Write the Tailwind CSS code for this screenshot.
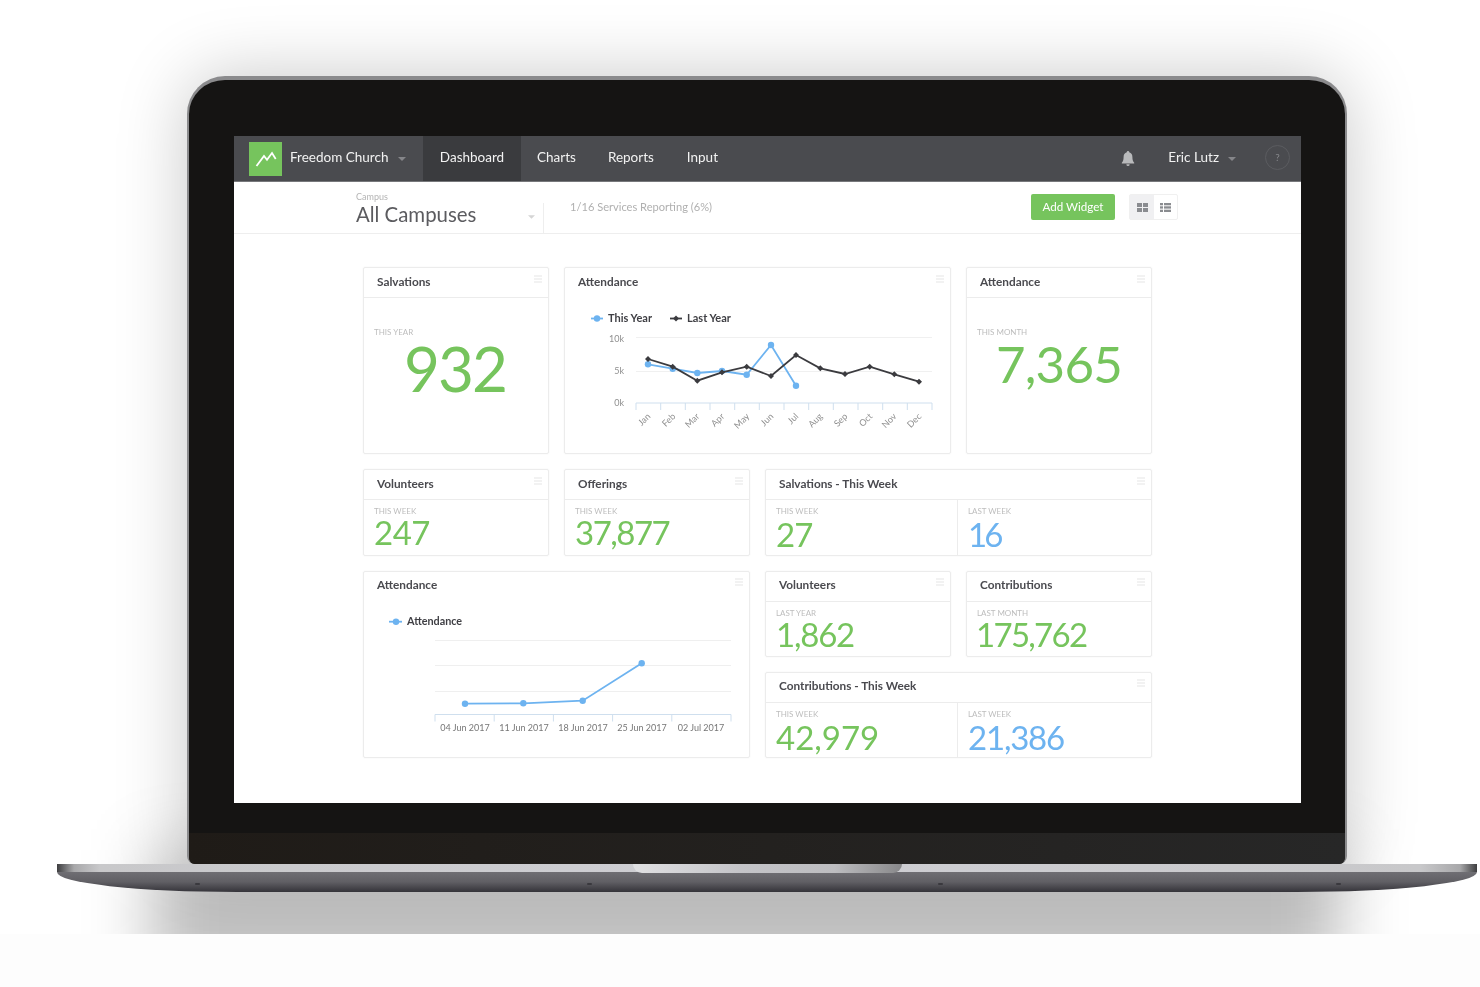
<!DOCTYPE html>
<html lang="en">
<head>
    <meta charset="UTF-8">
    <meta name="viewport" content="width=device-width, initial-scale=1.0">
    <title>Freedom Church Dashboard</title>
    <script src="https://cdn.jsdelivr.net/npm/@tailwindcss/browser@4"></script>
</head>
<body class="bg-[#fdfdfd] font-['Lato','Liberation_Sans',sans-serif] overflow-hidden">
  <div class="relative h-[934px] overflow-hidden bg-white pt-[76px]">
    <!-- soft shadow under the laptop -->
    <div class="absolute left-[150px] top-[850px] w-[1190px] h-[130px] bg-black/25 blur-[32px]"></div>

    <!-- lid -->
    <div class="relative ml-[187px] w-[1160px] h-[788px] flex flex-col border-x-[2px] border-t-[4px] border-[#8b8b8d] rounded-t-[38px] rounded-b-[8px] bg-[#151413] shadow-[0_0_70px_rgba(0,0,0,0.22)]">
      <div class="pt-[56px] pl-[45px] pr-[44px]">
        <div class="w-[1067px] h-[667px] bg-white blur-[0.7px] overflow-hidden">
          <!-- nav -->
          <div class="h-[46px] bg-[#4a4b4f] flex items-center text-[#f2f2f2] text-[13.500px] border-b border-[#77787b]">
            <div class="ml-[15px] w-[33px] h-[34px] bg-[#76c45d]">
              <svg viewBox="0 0 33 34" class="w-[33px] h-[34px]" fill="none" stroke="#fff" stroke-width="1.800"><polyline points="7.5,24 15,14 18,17.7 23,11 26.7,17"/></svg>
            </div>
            <span class="ml-[8px] mb-[2px] w-[99px] whitespace-nowrap">Freedom Church</span>
            <svg class="ml-[9px] w-[8px] h-[4px]" viewBox="0 0 8 4"><path d="M0 0h8L4 4z" fill="#85868a"/></svg>
            <div class="ml-[17px] w-[98px] h-full pb-[2px] bg-[#3a3b3e] flex items-center justify-center">Dashboard</div>
            <span class="ml-[16px] mb-[2px]">Charts</span>
            <span class="ml-[32px] mb-[2px]">Reports</span>
            <span class="ml-[33px] mb-[2px]">Input</span>
            <svg class="ml-auto w-[14px] h-[15px]" viewBox="0 0 14 15"><path d="M7 0a1.200 1.200 0 0 1 1.200 1.300C10.400 1.900 11.400 3.700 11.400 6c0 3 .6 4.300 1.800 5.700v.8H.8v-.8C2 10.300 2.600 9 2.600 6c0-2.300 1-4.100 3.200-4.700A1.200 1.200 0 0 1 7 0zM5.400 13.200h3.200A1.700 1.700 0 0 1 7 15a1.700 1.700 0 0 1-1.600-1.800z" fill="#b9babc"/></svg>
            <span class="ml-[33px] mb-[2px]">Eric Lutz</span>
            <svg class="ml-[9px] w-[8px] h-[4px]" viewBox="0 0 8 4"><path d="M0 0h8L4 4z" fill="#85868a"/></svg>
            <div class="ml-[29px] mr-[11px] mb-[2px] w-[25px] h-[25px] rounded-full border border-[#5b5c60] flex items-center justify-center text-[10px] text-[#85868a]">?</div>
          </div>
          <!-- sub header -->
          <div class="h-[52px] border-b border-[#eeeeee] flex text-[#555]">
            <div class="ml-[122px] w-[187px] pt-[9px] relative">
              <div class="text-[9px] leading-[11px] text-[#b4b4b4]">Campus</div>
              <div class="text-[20.400px] leading-[24px] text-[#5b5b5f]">All Campuses</div>
              <svg class="absolute right-[8px] top-[33px] w-[7px] h-[4px]" viewBox="0 0 8 4"><path d="M0 0h8L4 4z" fill="#d5d5d5"/></svg>
            </div>
            <div class="mt-[21px] w-px bg-[#eeeeee]"></div>
            <div class="ml-[26px] mt-[18px] text-[11.100px] leading-[14px] text-[#b0b0b0]">1/16 Services Reporting (6%)</div>
            <button class="ml-auto mt-[12px] w-[84px] h-[26px] bg-[#76c45d] rounded-[2px] text-white text-[11.600px]">Add Widget</button>
            <div class="ml-[14px] mr-[123px] mt-[12px] w-[49px] h-[26px] flex border border-[#f0f0f0] rounded-[2px]">
              <div class="w-[24px] bg-[#f0f0f2] flex items-center justify-center">
                <svg class="w-[11px] h-[9px]" viewBox="0 0 11 9" fill="#8a8c90"><rect width="5" height="4"/><rect x="6" width="5" height="4"/><rect y="5" width="5" height="4"/><rect x="6" y="5" width="5" height="4"/></svg>
              </div>
              <div class="flex-1 flex items-center justify-center">
                <svg class="w-[11px] h-[9px]" viewBox="0 0 11 9" fill="#8a8c90"><rect width="3" height="2.300"/><rect x="4" width="7" height="2.300"/><rect y="3.300" width="3" height="2.300"/><rect x="4" y="3.300" width="7" height="2.300"/><rect y="6.700" width="3" height="2.300"/><rect x="4" y="6.700" width="7" height="2.300"/></svg>
              </div>
            </div>
          </div>
          <!-- widgets -->
          <div class="ml-[129px] mt-[33px] grid grid-cols-[186px_186px_186px_186px] grid-rows-[187px_87px_86px_86px] gap-[15px]">

            <div class="border border-[#ececec] rounded-[2px] shadow-[0_0_2px_rgba(0,0,0,0.06)]">
              <div class="h-[30px] pb-[2px] border-b border-[#ececec] pl-[13px] flex items-center justify-between text-[11.800px] font-bold text-[#4a4a4f]">Salvations<svg class="mr-[6px] mb-[6px] w-[8px] h-[8px]" viewBox="0 0 8 8" fill="#f2f2f2"><path d="M0 0h8v2H0zM0 3h8v2H0zM0 6h8v2H0z"/></svg></div>
              <div class="pl-[10px] pt-[29px] text-[8px] leading-[10px] uppercase text-[#bdbdbd]">This Year</div>
              <div class="text-center pr-[2px] mt-[1px] text-[62px] leading-[60px] tracking-[-2px] text-[#76c45d]">932</div>
            </div>

            <div class="col-span-2 border border-[#ececec] rounded-[2px] shadow-[0_0_2px_rgba(0,0,0,0.06)]">
              <div class="h-[30px] pb-[3px] pl-[13px] flex items-center justify-between text-[11.800px] font-bold text-[#4a4a4f]">Attendance<svg class="mr-[6px] mb-[6px] w-[8px] h-[8px]" viewBox="0 0 8 8" fill="#f2f2f2"><path d="M0 0h8v2H0zM0 3h8v2H0zM0 6h8v2H0z"/></svg></div>
              <svg class="block w-[385px] h-[155px]" viewBox="565 298 385 155" font-family="Lato, Liberation Sans, sans-serif">
                <g stroke="#f0f0f0"><line x1="636" y1="337.500" x2="932" y2="337.500"/><line x1="636" y1="371.500" x2="932" y2="371.500"/></g>
                <path d="M636 403H932M636 403v7M660.700 403v7M685.300 403v7M710 403v7M734.700 403v7M759.300 403v7M784 403v7M808.700 403v7M833.300 403v7M858 403v7M882.700 403v7M907.300 403v7M932 403v7" stroke="#cfdfee" fill="none"/>
                <g font-size="9" fill="#8f8f8f" text-anchor="end"><text x="624" y="342">10k</text><text x="624" y="374">5k</text><text x="624" y="406">0k</text></g>
                <g font-size="9" fill="#8f8f8f" text-anchor="end">
                  <text transform="translate(651 417) rotate(-45)">Jan</text><text transform="translate(676 417) rotate(-45)">Feb</text><text transform="translate(700 417) rotate(-45)">Mar</text><text transform="translate(725 417) rotate(-45)">Apr</text><text transform="translate(750 417) rotate(-45)">May</text><text transform="translate(774 417) rotate(-45)">Jun</text><text transform="translate(799 417) rotate(-45)">Jul</text><text transform="translate(823 417) rotate(-45)">Aug</text><text transform="translate(848 417) rotate(-45)">Sep</text><text transform="translate(873 417) rotate(-45)">Oct</text><text transform="translate(897 417) rotate(-45)">Nov</text><text transform="translate(922 417) rotate(-45)">Dec</text>
                </g>
                <polyline points="648,364.300 672.700,368.700 697.300,373 722,371 746.700,374.700 771,345 796,385.700" fill="none" stroke="#6db3f0" stroke-width="1.800"/>
                <g fill="#6db3f0"><circle cx="648" cy="364.300" r="3.200"/><circle cx="672.700" cy="368.700" r="3.200"/><circle cx="697.300" cy="373" r="3.200"/><circle cx="722" cy="371" r="3.200"/><circle cx="746.700" cy="374.700" r="3.200"/><circle cx="771" cy="345" r="3.200"/><circle cx="796" cy="385.700" r="3.200"/></g>
                <polyline points="648,359 672.700,366.700 697.300,380.700 722,372.300 746.700,366.700 771,376 796,355 820.300,368.300 845,374 869.700,366.700 894.300,374.300 919,381.700" fill="none" stroke="#3b3b3f" stroke-width="1.800"/>
                <g fill="#3b3b3f"><path d="M648 356l3 3-3 3-3-3zM672.700 363.700l3 3-3 3-3-3zM697.300 377.700l3 3-3 3-3-3zM722 369.300l3 3-3 3-3-3zM746.700 363.700l3 3-3 3-3-3zM771 373l3 3-3 3-3-3zM796 352l3 3-3 3-3-3zM820.300 365.300l3 3-3 3-3-3zM845 371l3 3-3 3-3-3zM869.700 363.700l3 3-3 3-3-3zM894.300 371.300l3 3-3 3-3-3zM919 378.700l3 3-3 3-3-3z"/></g>
                <line x1="591" y1="318.500" x2="603" y2="318.500" stroke="#6db3f0" stroke-width="1.800"/><circle cx="597" cy="318.500" r="3.200" fill="#6db3f0"/>
                <text x="608" y="322" font-size="11" font-weight="700" fill="#3f3f44">This Year</text>
                <line x1="670" y1="318.500" x2="682" y2="318.500" stroke="#3b3b3f" stroke-width="1.800"/><path d="M676 315.500l3 3-3 3-3-3z" fill="#3b3b3f"/>
                <text x="687" y="322" font-size="11" font-weight="700" fill="#3f3f44">Last Year</text>
              </svg>
            </div>

            <div class="border border-[#ececec] rounded-[2px] shadow-[0_0_2px_rgba(0,0,0,0.06)]">
              <div class="h-[30px] pb-[2px] border-b border-[#ececec] pl-[13px] flex items-center justify-between text-[11.800px] font-bold text-[#4a4a4f]">Attendance<svg class="mr-[6px] mb-[6px] w-[8px] h-[8px]" viewBox="0 0 8 8" fill="#f2f2f2"><path d="M0 0h8v2H0zM0 3h8v2H0zM0 6h8v2H0z"/></svg></div>
              <div class="pl-[10px] pt-[29px] text-[8px] leading-[10px] uppercase text-[#bdbdbd]">This Month</div>
              <div class="text-center text-[51px] leading-[48px] tracking-[-0.800px] text-[#76c45d] mt-[3px]">7,365</div>
            </div>

            <div class="border border-[#ececec] rounded-[2px] shadow-[0_0_2px_rgba(0,0,0,0.06)]">
              <div class="h-[30px] pb-[2px] border-b border-[#ececec] pl-[13px] flex items-center justify-between text-[11.800px] font-bold text-[#4a4a4f]">Volunteers<svg class="mr-[6px] mb-[6px] w-[8px] h-[8px]" viewBox="0 0 8 8" fill="#f2f2f2"><path d="M0 0h8v2H0zM0 3h8v2H0zM0 6h8v2H0z"/></svg></div>
              <div class="pl-[10px] pt-[6px] text-[8px] leading-[10px] uppercase text-[#bdbdbd]">This Week</div>
              <div class="pl-[10px] mt-[2px] text-[33px] leading-[28px] tracking-[-0.500px] text-[#76c45d]">247</div>
            </div>

            <div class="border border-[#ececec] rounded-[2px] shadow-[0_0_2px_rgba(0,0,0,0.06)]">
              <div class="h-[30px] pb-[2px] border-b border-[#ececec] pl-[13px] flex items-center justify-between text-[11.800px] font-bold text-[#4a4a4f]">Offerings<svg class="mr-[6px] mb-[6px] w-[8px] h-[8px]" viewBox="0 0 8 8" fill="#f2f2f2"><path d="M0 0h8v2H0zM0 3h8v2H0zM0 6h8v2H0z"/></svg></div>
              <div class="pl-[10px] pt-[6px] text-[8px] leading-[10px] uppercase text-[#bdbdbd]">This Week</div>
              <div class="pl-[10px] mt-[2px] text-[33px] leading-[28px] tracking-[-1.500px] text-[#76c45d]">37,877</div>
            </div>

            <div class="col-span-2 border border-[#ececec] rounded-[2px] shadow-[0_0_2px_rgba(0,0,0,0.06)]">
              <div class="h-[30px] pb-[2px] border-b border-[#ececec] pl-[13px] flex items-center justify-between text-[11.800px] font-bold text-[#4a4a4f]">Salvations - This Week<svg class="mr-[6px] mb-[6px] w-[8px] h-[8px]" viewBox="0 0 8 8" fill="#f2f2f2"><path d="M0 0h8v2H0zM0 3h8v2H0zM0 6h8v2H0z"/></svg></div>
              <div class="flex h-[55px]">
                <div class="w-[192px] border-r border-[#ececec]">
                  <div class="pl-[10px] pt-[6px] text-[8px] leading-[10px] uppercase text-[#bdbdbd]">This Week</div>
                  <div class="pl-[10px] mt-[4px] text-[33px] leading-[28px] tracking-[-1px] text-[#76c45d]">27</div>
                </div>
                <div class="flex-1">
                  <div class="pl-[10px] pt-[6px] text-[8px] leading-[10px] uppercase text-[#bdbdbd]">Last Week</div>
                  <div class="pl-[10px] mt-[4px] text-[33px] leading-[28px] tracking-[-3px] text-[#6db3f0]">16</div>
                </div>
              </div>
            </div>

            <div class="col-span-2 row-span-2 border border-[#ececec] rounded-[2px] shadow-[0_0_2px_rgba(0,0,0,0.06)]">
              <div class="h-[30px] pb-[4px] pl-[13px] flex items-center justify-between text-[11.800px] font-bold text-[#4a4a4f]">Attendance<svg class="mr-[6px] mb-[6px] w-[8px] h-[8px]" viewBox="0 0 8 8" fill="#f2f2f2"><path d="M0 0h8v2H0zM0 3h8v2H0zM0 6h8v2H0z"/></svg></div>
              <svg class="block w-[385px] h-[155px]" viewBox="364 602 385 155" font-family="Lato, Liberation Sans, sans-serif">
                <g stroke="#efefef"><line x1="435" y1="640.500" x2="731" y2="640.500"/><line x1="435" y1="665.500" x2="731" y2="665.500"/><line x1="435" y1="691.500" x2="731" y2="691.500"/></g>
                <path d="M435 714.500H731M435 714.500v7M494.200 714.500v7M553.400 714.500v7M612.600 714.500v7M671.800 714.500v7M731 714.500v7" stroke="#cfdfee" fill="none"/>
                <g font-size="9" fill="#777" text-anchor="middle"><text x="465" y="731">04 Jun 2017</text><text x="524" y="731">11 Jun 2017</text><text x="583" y="731">18 Jun 2017</text><text x="642" y="731">25 Jun 2017</text><text x="701" y="731">02 Jul 2017</text></g>
                <polyline points="465,703.700 523.300,703.300 582.700,700.700 641.700,663.300" fill="none" stroke="#6db3f0" stroke-width="1.800"/>
                <g fill="#6db3f0"><circle cx="465" cy="703.700" r="3.200"/><circle cx="523.300" cy="703.300" r="3.200"/><circle cx="582.700" cy="700.700" r="3.200"/><circle cx="641.700" cy="663.300" r="3.200"/></g>
                <line x1="389" y1="621.700" x2="402" y2="621.700" stroke="#6db3f0" stroke-width="1.800"/><circle cx="396" cy="621.700" r="3.200" fill="#6db3f0"/>
                <text x="407" y="625" font-size="10.800" font-weight="700" fill="#3f3f44">Attendance</text>
              </svg>
            </div>

            <div class="border border-[#ececec] rounded-[2px] shadow-[0_0_2px_rgba(0,0,0,0.06)]">
              <div class="h-[30px] pb-[4px] border-b border-[#ececec] pl-[13px] flex items-center justify-between text-[11.800px] font-bold text-[#4a4a4f]">Volunteers<svg class="mr-[6px] mb-[6px] w-[8px] h-[8px]" viewBox="0 0 8 8" fill="#f2f2f2"><path d="M0 0h8v2H0zM0 3h8v2H0zM0 6h8v2H0z"/></svg></div>
              <div class="pl-[10px] pt-[6px] text-[8px] leading-[10px] uppercase text-[#bdbdbd]">Last Year</div>
              <div class="pl-[10px] mt-[2px] text-[33px] leading-[28px] tracking-[-1.200px] text-[#76c45d]">1,862</div>
            </div>

            <div class="border border-[#ececec] rounded-[2px] shadow-[0_0_2px_rgba(0,0,0,0.06)]">
              <div class="h-[30px] pb-[4px] border-b border-[#ececec] pl-[13px] flex items-center justify-between text-[11.800px] font-bold text-[#4a4a4f]">Contributions<svg class="mr-[6px] mb-[6px] w-[8px] h-[8px]" viewBox="0 0 8 8" fill="#f2f2f2"><path d="M0 0h8v2H0zM0 3h8v2H0zM0 6h8v2H0z"/></svg></div>
              <div class="pl-[10px] pt-[6px] text-[8px] leading-[10px] uppercase text-[#bdbdbd]">Last Month</div>
              <div class="pl-[9px] mt-[2px] text-[33px] leading-[28px] tracking-[-1.700px] text-[#76c45d]">175,762</div>
            </div>

            <div class="col-span-2 col-start-3 border border-[#ececec] rounded-[2px] shadow-[0_0_2px_rgba(0,0,0,0.06)]">
              <div class="h-[30px] pb-[4px] border-b border-[#ececec] pl-[13px] flex items-center justify-between text-[11.800px] font-bold text-[#4a4a4f]">Contributions - This Week<svg class="mr-[6px] mb-[6px] w-[8px] h-[8px]" viewBox="0 0 8 8" fill="#f2f2f2"><path d="M0 0h8v2H0zM0 3h8v2H0zM0 6h8v2H0z"/></svg></div>
              <div class="flex h-[54px]">
                <div class="w-[192px] border-r border-[#ececec]">
                  <div class="pl-[10px] pt-[6px] text-[8px] leading-[10px] uppercase text-[#bdbdbd]">This Week</div>
                  <div class="pl-[10px] mt-[4px] text-[33px] leading-[28px] text-[#76c45d]">42,979</div>
                </div>
                <div class="flex-1">
                  <div class="pl-[10px] pt-[6px] text-[8px] leading-[10px] uppercase text-[#bdbdbd]">Last Week</div>
                  <div class="pl-[10px] mt-[4px] text-[33px] leading-[28px] tracking-[-1.200px] text-[#6db3f0]">21,386</div>
                </div>
              </div>
            </div>

          </div>
        </div>
      </div>
      <!-- chin -->
      <div class="mt-[30px] flex-1 bg-linear-to-r from-[#1f1b17] to-[#272727] rounded-b-[6px]"></div>
    </div>

    <!-- base -->
    <div class="relative ml-[57px] w-[1420px]">
      <div class="h-[8px] bg-[linear-gradient(90deg,#3e3e40_0%,#a8a8aa_1.2%,#c8c8ca_3%,#cfcfd4_50%,#c8c8ca_96%,#a8a8aa_98.800%,#3e3e40_100%)]"></div>
      <div class="h-[20px] bg-linear-to-b from-[#6f6e73] via-[#605f64] to-[#35343a] rounded-b-[180px_20px]"></div>
      <div class="absolute left-[576px] top-0 w-[269px] h-[9px] rounded-b-[10px] bg-[linear-gradient(90deg,#e0e0e2_0%,#c4c4c8_40%,#bdbdc0_75%,#88888a_100%)]"></div>
      <div class="absolute left-[138px] top-[19px] w-[5px] h-[2px] rounded-full bg-[#3a393e]"></div>
      <div class="absolute left-[530px] top-[19px] w-[5px] h-[2px] rounded-full bg-[#3a393e]"></div>
      <div class="absolute left-[881px] top-[19px] w-[5px] h-[2px] rounded-full bg-[#3a393e]"></div>
      <div class="absolute left-[1279px] top-[19px] w-[5px] h-[2px] rounded-full bg-[#3a393e]"></div>
    </div>
  </div>
</body>
</html>
